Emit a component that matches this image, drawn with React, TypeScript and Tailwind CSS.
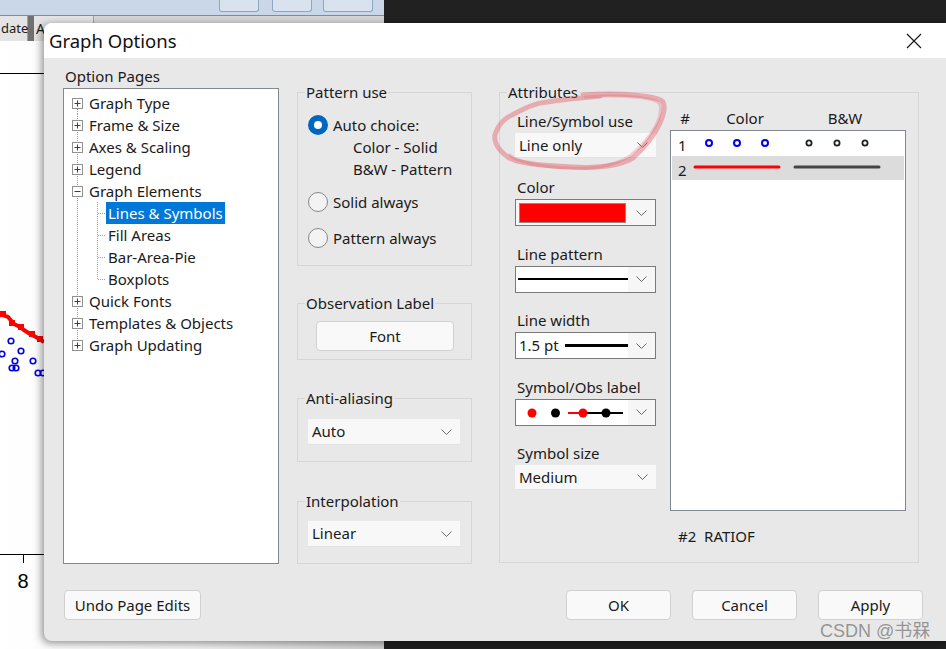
import React from "react";
import clsx from "clsx";

const treeItems = [
  { label: "Graph Type", level: 0, sign: "+" },
  { label: "Frame & Size", level: 0, sign: "+" },
  { label: "Axes & Scaling", level: 0, sign: "+" },
  { label: "Legend", level: 0, sign: "+" },
  { label: "Graph Elements", level: 0, sign: "-" },
  { label: "Lines & Symbols", level: 1, selected: true },
  { label: "Fill Areas", level: 1 },
  { label: "Bar-Area-Pie", level: 1 },
  { label: "Boxplots", level: 1, lastChild: true },
  { label: "Quick Fonts", level: 0, sign: "+" },
  { label: "Templates & Objects", level: 0, sign: "+" },
  { label: "Graph Updating", level: 0, sign: "+", last: true },
];

type TreeItem = (typeof treeItems)[number] & { selected?: boolean; lastChild?: boolean; last?: boolean };

const Chevron = () => (
  <svg width="11" height="6" viewBox="0 0 11 6">
    <path d="M0.5 0.5l5 5 5-5" fill="none" stroke="#6a6a6a" strokeWidth="1" />
  </svg>
);

const TreeRow = ({ item, first }: { item: TreeItem; first: boolean }) => {
  const dot = { stroke: "#a0a0a0", strokeWidth: 1, strokeDasharray: "1 1" };
  return (
    <div className="flex items-center h-[22px]">
      {item.level === 0 ? (
        <svg width="18" height="22" viewBox="0 0 18 22" className="shrink-0">
          <line x1="6.5" x2="6.5" y1={first ? 11 : 0} y2={item.last ? 11 : 22} {...dot} />
          <rect x="1.5" y="6.5" width="10" height="10" fill="#fff" stroke="#919191" />
          <line x1="3.5" x2="9.5" y1="11.5" y2="11.5" stroke="#2c3e70" />
          {item.sign === "+" && <line x1="6.5" x2="6.5" y1="8.5" y2="14.5" stroke="#2c3e70" />}
        </svg>
      ) : (
        <svg width="35" height="22" viewBox="0 0 35 22" className="shrink-0">
          <line x1="6.5" x2="6.5" y1="0" y2="22" {...dot} />
          <line x1="26.5" x2="26.5" y1="0" y2={item.lastChild ? 11.5 : 22} {...dot} />
          <line x1="27" x2="35" y1="11.5" y2="11.5" {...dot} />
        </svg>
      )}
      <span
        className={clsx(
          "h-[22px] leading-[22px] px-[2px] whitespace-nowrap",
          item.level === 0 && "-ml-[2px]",
          item.selected ? "bg-[#0078d7] text-white" : "text-[#1a1a1a]"
        )}
      >
        {item.label}
      </span>
    </div>
  );
};

const Radio = ({ checked, label }: { checked?: boolean; label: string }) => (
  <div className="flex items-center h-[22px] gap-[5px]">
    {checked ? (
      <span className="w-[20px] h-[20px] rounded-full bg-[#0067c0] flex items-center justify-center">
        <span className="w-[8px] h-[8px] rounded-full bg-white" />
      </span>
    ) : (
      <span className="w-[20px] h-[20px] rounded-full bg-[#f3f3f3] border border-[#878787]" />
    )}
    <span>{label}</span>
  </div>
);

const PlainSelect = ({ value, className }: { value: string; className?: string }) => (
  <div
    className={clsx(
      "flex items-center justify-between bg-[#f8f8f8] border-b border-[#e2e2e2] pl-[4px] pr-[8px]",
      className
    )}
  >
    <span>{value}</span>
    <Chevron />
  </div>
);

const BoxSelect = ({ children, white }: { children: React.ReactNode; white?: boolean }) => (
  <div className="flex h-[27px] border border-[#7a7a7a] bg-[#f6f6f6]">
    <div className={clsx("w-[112px] flex items-center", white && "bg-white")}>{children}</div>
    <div className="flex-1 flex items-center justify-center">
      <Chevron />
    </div>
  </div>
);

const Field = ({ label, className, children }: { label: string; className?: string; children: React.ReactNode }) => (
  <div className={clsx("flex flex-col", className)}>
    <span className="h-[20px] leading-[20px] ml-[2px]">{label}</span>
    <div className="mt-[2px]">{children}</div>
  </div>
);

const Group = ({ legend, className, children }: { legend: string; className?: string; children: React.ReactNode }) => (
  <fieldset className={clsx("border border-[#d6d6d6]", className)}>
    <legend className="ml-[7px] px-[1px] h-[20px] leading-[20px]">{legend}</legend>
    {children}
  </fieldset>
);

const Button = ({ label, className }: { label: string; className?: string }) => (
  <button
    className={clsx(
      "h-[30px] rounded-[4px] border border-[#d0d0d0] bg-[#f9f9f9] text-[#1a1a1a] flex items-center justify-center",
      className
    )}
  >
    {label}
  </button>
);

const App = () => {
  return (
    <div className="relative w-[946px] h-[649px] overflow-hidden bg-[#212121] font-['Noto_Sans',sans-serif] text-[15px] text-[#1a1a1a]">
      {/* window behind the dialog */}
      <div className="absolute left-0 top-0 w-[384px] h-[649px] flex flex-col bg-[#cfcfcf]">
        <div className="h-[15px] bg-[#c9d7e8] flex items-start pl-[219px]">
          <div className="w-[40px] h-[12px] border border-t-0 border-[#8ea6c4] rounded-b-[3px] bg-[#d8e3ef]" />
          <div className="w-[40px] h-[12px] ml-[13px] border border-t-0 border-[#8ea6c4] rounded-b-[3px] bg-[#d8e3ef]" />
          <div className="w-[50px] h-[12px] ml-[11px] border border-t-0 border-[#8ea6c4] rounded-b-[3px] bg-[#d8e3ef]" />
        </div>
        <div className="h-[1px] bg-[#8a8a8a]" />
        <div className="h-[25px] bg-[#d6d6d6] flex items-stretch">
          <div className="w-[28px] bg-[#e4e4e4] border-r border-[#a0a0a0] flex items-center pl-[1px] text-[13px]">
            date
          </div>
          <div className="w-[6px] bg-[#707070]" />
          <div className="w-[60px] bg-[#e4e4e4] border-r border-[#a0a0a0] pl-[2px] text-[14px] flex items-center">A</div>
        </div>
        <div className="relative flex-1 bg-gradient-to-r from-white via-[#f4f4f4] to-[#d0d0d0]">
          <svg width="46" height="608" viewBox="0 0 46 608" className="absolute left-0 top-0">
            <line x1="0" x2="46" y1="32.5" y2="32.5" stroke="#000" />
            <polyline
              points="0,273 8,276 14,283 20,286 24,289 30,293 36,296 44,301"
              fill="none"
              stroke="#f00"
              strokeWidth="4"
            />
            {[
              [3, 273],
              [12, 282],
              [21, 286],
              [32, 293],
              [40, 298],
            ].map(([x, y], i) => (
              <rect key={i} x={x - 3} y={y - 3} width="6" height="6" fill="#f00" />
            ))}
            {[
              [11, 300],
              [2, 313],
              [21, 310],
              [15, 320],
              [33, 320],
              [12, 327],
              [16, 327],
              [38, 332],
              [43, 332],
            ].map(([x, y], i) => (
              <circle key={i} cx={x} cy={y} r="2.8" fill="none" stroke="#0000e0" strokeWidth="1.6" />
            ))}
            <line x1="0" x2="46" y1="513.5" y2="513.5" stroke="#000" />
            <line x1="23.5" x2="23.5" y1="513" y2="522" stroke="#000" />
            <text x="23" y="547" textAnchor="middle" fontSize="20" fill="#000" fontFamily="Liberation Sans, sans-serif">
              8
            </text>
          </svg>
        </div>
      </div>

      {/* dialog */}
      <div className="absolute left-[44px] top-[23px] w-[910px] h-[618px] rounded-[8px] bg-[#e8e8e8] shadow-[-2px_2px_8px_rgba(0,0,0,0.45)] flex flex-col overflow-hidden">
        <div className="h-[35px] bg-white flex items-center justify-between shrink-0">
          <span className="ml-[5px] text-[18.5px] text-[#111]">Graph Options</span>
          <svg width="16" height="16" viewBox="0 0 16 16" className="mr-[32px]">
            <path d="M1 1l14 14M15 1L1 15" stroke="#1a1a1a" strokeWidth="1.2" />
          </svg>
        </div>

        <div className="flex pl-[19px] pt-[8px]">
          {/* option pages */}
          <div className="w-[216px] flex flex-col">
            <span className="ml-[2px] h-[20px] leading-[20px]">Option Pages</span>
            <div className="mt-[2px] h-[476px] border border-[#828790] bg-white pl-[7px] pt-[3px]">
              {treeItems.map((item, i) => (
                <TreeRow key={item.label} item={item as TreeItem} first={i === 0} />
              ))}
            </div>
          </div>

          {/* middle column */}
          <div className="w-[175px] ml-[18px] mt-[16px] flex flex-col">
            <Group legend="Pattern use" className="h-[184px]">
              <div className="pl-[10px]">
                <div className="mt-[12px]">
                  <Radio checked label="Auto choice:" />
                </div>
                <div className="pl-[45px] leading-[22px]">
                  <div>Color - Solid</div>
                  <div>B&amp;W - Pattern</div>
                </div>
                <div className="mt-[11px]">
                  <Radio label="Solid always" />
                </div>
                <div className="mt-[14px]">
                  <Radio label="Pattern always" />
                </div>
              </div>
            </Group>

            <Group legend="Observation Label" className="h-[67px] mt-[27px]">
              <div className="pl-[18px]">
                <Button label="Font" className="w-[138px] h-[27px] mt-[8px]" />
              </div>
            </Group>

            <Group legend="Anti-aliasing" className="h-[74px] mt-[28px]">
              <div className="pl-[10px]">
                <PlainSelect value="Auto" className="w-[152px] h-[26px] mt-[11px]" />
              </div>
            </Group>

            <Group legend="Interpolation" className="h-[73px] mt-[29px]">
              <div className="pl-[10px]">
                <PlainSelect value="Linear" className="w-[152px] h-[26px] mt-[10px]" />
              </div>
            </Group>
          </div>

          {/* attributes */}
          <Group legend="Attributes" className="w-[420px] h-[481px] ml-[27px] mt-[16px]">
            <div className="flex">
              <div className="w-[141px] ml-[15px] pt-[9px] flex flex-col gap-[17.5px]">
                <Field label="Line/Symbol use" className="mb-[1.5px]">
                  <PlainSelect value="Line only" className="h-[25px]" />
                </Field>
                <Field label="Color">
                  <BoxSelect>
                    <span className="ml-[3px] w-[107px] h-[20px] bg-[#ff0000] border border-[#8c8c8c]" />
                  </BoxSelect>
                </Field>
                <Field label="Line pattern">
                  <BoxSelect white>
                    <span className="ml-[2px] flex-1 h-[2px] bg-black" />
                  </BoxSelect>
                </Field>
                <Field label="Line width">
                  <BoxSelect white>
                    <span className="ml-[3px]">1.5 pt</span>
                    <span className="ml-[6px] flex-1 h-[3px] bg-black" />
                  </BoxSelect>
                </Field>
                <Field label="Symbol/Obs label">
                  <BoxSelect white>
                    <svg width="112" height="25" viewBox="0 0 112 25">
                      <circle cx="16" cy="13" r="4.5" fill="#f00" />
                      <circle cx="39.5" cy="13" r="4.5" fill="#000" />
                      <line x1="52" x2="67" y1="13" y2="13" stroke="#f00" strokeWidth="2" />
                      <circle cx="67" cy="13" r="4.5" fill="#f00" />
                      <line x1="71" x2="107" y1="13" y2="13" stroke="#000" strokeWidth="2" />
                      <circle cx="90" cy="13" r="4.5" fill="#000" />
                    </svg>
                  </BoxSelect>
                </Field>
                <Field label="Symbol size">
                  <PlainSelect value="Medium" className="h-[25px]" />
                </Field>
              </div>

              <div className="w-[236px] ml-[14px] pt-[6px] flex flex-col">
                <div className="flex h-[20px] leading-[20px]">
                  <span className="w-[30px] text-center">#</span>
                  <span className="w-[90px] text-center">Color</span>
                  <span className="w-[110px] text-center">B&amp;W</span>
                </div>
                <div className="mt-[2px] h-[381px] border border-[#828790] bg-white px-[1px] pt-[1px]">
                  <div className="flex items-center h-[24px]">
                    <span className="ml-[6px] w-[12px] mt-[2px]">1</span>
                    <svg width="210" height="24" viewBox="0 0 210 24">
                      {[19, 47, 75].map((x) => (
                        <circle key={x} cx={x} cy="11" r="3" fill="none" stroke="#0000ee" strokeWidth="2" />
                      ))}
                      {[119, 147, 175].map((x) => (
                        <circle key={x} cx={x} cy="11" r="2.6" fill="none" stroke="#222" strokeWidth="1.8" />
                      ))}
                    </svg>
                  </div>
                  <div className="flex items-center h-[24px] bg-[#dcdcdc]">
                    <span className="ml-[6px] w-[12px] mt-[4px]">2</span>
                    <svg width="210" height="24" viewBox="0 0 210 24">
                      <line x1="5" x2="89" y1="11" y2="11" stroke="#f00" strokeWidth="3" strokeLinecap="round" />
                      <line x1="105" x2="189" y1="11" y2="11" stroke="#444" strokeWidth="3" strokeLinecap="round" />
                    </svg>
                  </div>
                </div>
                <span className="mt-[15px] ml-[8px] h-[20px] leading-[20px] whitespace-pre">#2  RATIOF</span>
              </div>
            </div>
          </Group>
        </div>

        {/* bottom buttons */}
        <div className="flex items-center mt-[26px] pl-[20px]">
          <Button label="Undo Page Edits" className="w-[137px]" />
          <div className="flex gap-[21px] ml-[365px]">
            <Button label="OK" className="w-[105px]" />
            <Button label="Cancel" className="w-[105px]" />
            <Button label="Apply" className="w-[105px]" />
          </div>
        </div>

        {/* hand-drawn highlight */}
        <svg width="185" height="92" viewBox="0 0 185 92" className="absolute left-[446px] top-[65px] pointer-events-none">
          <path
            d="M93 7 C130 4,170 8,173 14 C177 22,170 45,143 70 C125 80,100 80,83 79 C55 78,25 75,18 69 C5 60,3 50,6 44 C9 36,15 30,22 27 C35 20,45 15,57 14 C75 11,100 9,110 8"
            fill="none"
            stroke="rgba(225,85,95,0.42)"
            strokeWidth="5"
            strokeLinecap="round"
          />
          <path
            d="M95 9 C135 6,168 10,170 17 C172 27,166 46,140 68 C120 80,95 81,80 80 C52 79,26 74,20 67"
            fill="none"
            stroke="rgba(225,85,95,0.25)"
            strokeWidth="3"
            strokeLinecap="round"
          />
        </svg>

        {/* watermark */}
        <span className="absolute left-[776px] top-[595px] text-[18px] text-[rgba(120,120,120,0.75)] font-['Liberation_Sans','Noto_Sans_CJK_SC',sans-serif]">
          CSDN @书槑
        </span>
      </div>
    </div>
  );
};

export default App;
